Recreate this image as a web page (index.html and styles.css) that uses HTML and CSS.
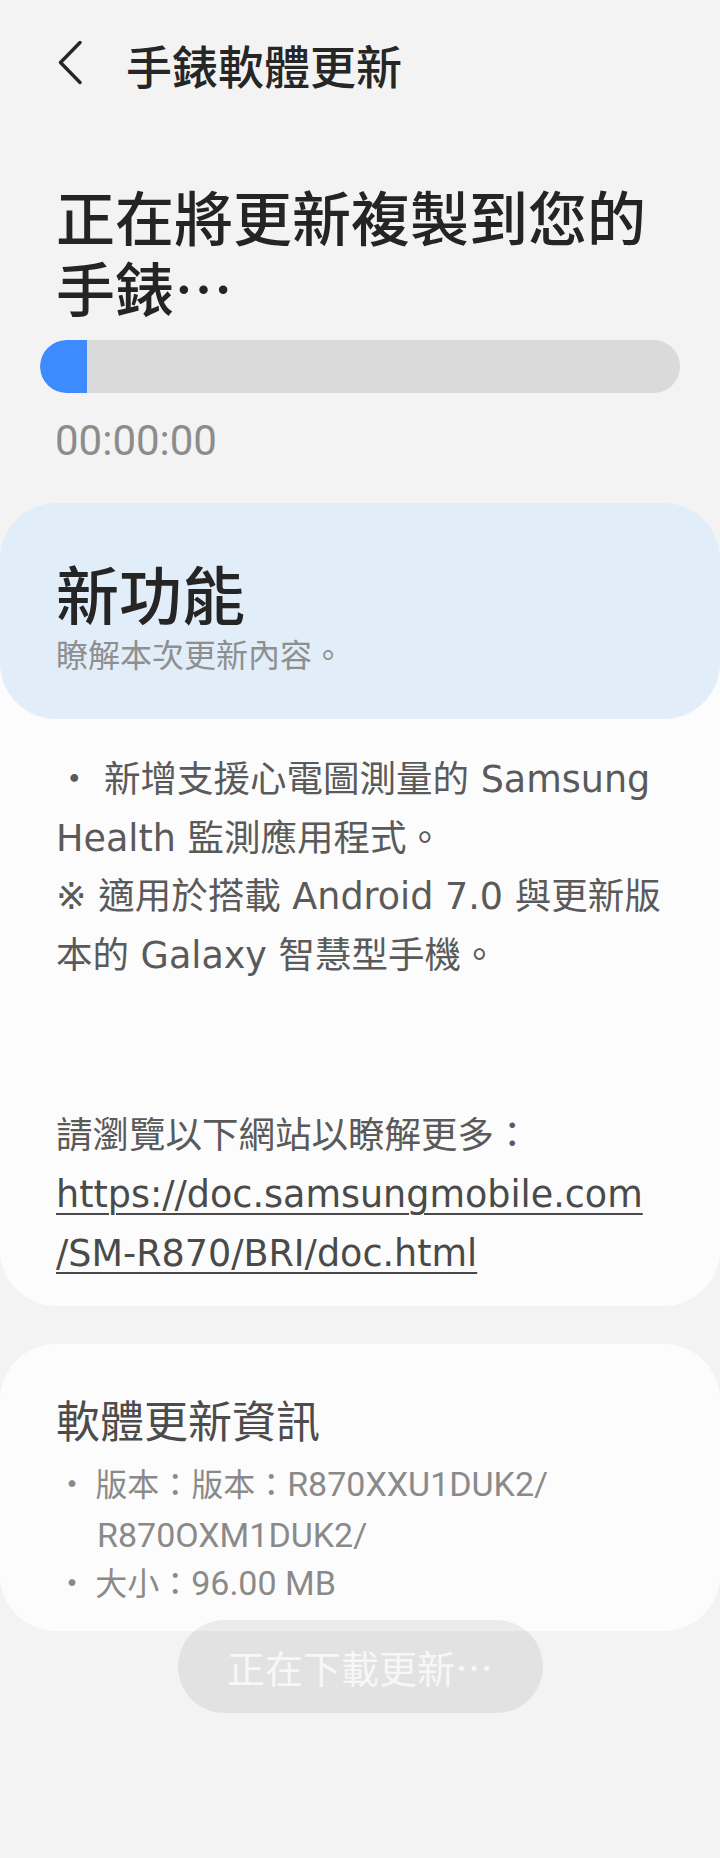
FILE: index.html
```html
<!DOCTYPE html>
<html lang="zh-Hant">
<head>
<meta charset="utf-8">
<title>手錶軟體更新</title>
<link rel="stylesheet" href="styles.css">
</head>
<body>
<div class="page">
  <header class="appbar">
    <svg class="back" width="28" height="44" viewBox="0 0 28 44" aria-hidden="true">
      <path d="M24 1.5 L4.5 21.5 L24 41.5" fill="none" stroke="#262626" stroke-width="3.4" stroke-linecap="round" stroke-linejoin="round"/>
    </svg>
    <h1 class="appbar-title">手錶軟體更新</h1>
  </header>

  <section class="status">
    <h2 class="status-title">正在將更新複製到您的<br>手錶…</h2>
    <div class="progress"><div class="progress-fill" style="width:47px"></div></div>
    <div class="time">00:00:00</div>
  </section>

  <section class="card">
    <div class="card-head">
      <h3 class="feature-title">新功能</h3>
      <p class="feature-sub">瞭解本次更新內容。</p>
    </div>
    <div class="notes">
      <p class="line">・ 新增支援心電圖測量的 Samsung</p>
      <p class="line">Health 監測應用程式。</p>
      <p class="line">※ 適用於搭載 Android 7.0 與更新版</p>
      <p class="line">本的 Galaxy 智慧型手機。</p>
      <p class="line blank">&nbsp;</p>
      <p class="line blank">&nbsp;</p>
      <p class="line">請瀏覽以下網站以瞭解更多：</p>
      <p class="line"><a class="link">https://doc.samsungmobile.com<br>/SM-R870/BRI/doc.html</a></p>
    </div>
  </section>

  <section class="card info">
    <h3 class="info-title">軟體更新資訊</h3>
    <ul class="info-list">
      <li>・ 版本：版本：<span class="num">R870XXU1DUK2/</span><br><span class="num">R870OXM1DUK2/</span></li>
      <li class="size">・ 大小：<span class="num">96.00 MB</span></li>
    </ul>
  </section>

  <div class="button">正在下載更新…</div>
</div>
</body>
</html>
```
FILE: styles.css
```css
html, body {
  margin: 0;
  padding: 0;
  background: #f3f3f3;
}
body {
  font-family: "Noto Sans CJK TC", "Noto Sans", sans-serif;
  color: #262626;
}
.page {
  width: 720px;
  min-height: 1858px;
}
h1, h2, h3, p, ul {
  margin: 0;
  padding: 0;
}

.appbar {
  height: 128px;
  display: flex;
  align-items: center;
  padding-left: 56px;
  box-sizing: border-box;
}
.back {
  display: block;
  margin-top: -2px;
}
.appbar-title {
  margin-left: 42px;
  font-size: 46px;
  line-height: 60px;
  font-weight: 500;
  color: #262626;
}

.status {
  padding: 52px 40px 0 40px;
}
.status-title {
  padding-left: 16px;
  font-size: 59px;
  line-height: 71px;
  font-weight: 500;
  color: #242424;
}
.progress {
  margin-top: 18px;
  height: 53px;
  border-radius: 27px;
  background: #dadada;
  overflow: hidden;
}
.progress-fill {
  height: 100%;
  background: #3d8bff;
  border-radius: 27px 0 0 27px;
}
.time {
  margin-top: 24px;
  padding-left: 15px;
  font-family: Roboto, "Noto Sans", sans-serif;
  font-size: 42px;
  line-height: 48px;
  color: #8c8c8c;
}

.card {
  margin-top: 38px;
  background: #fcfcfc;
  border-radius: 56px;
}
.card-head {
  height: 216px;
  box-sizing: border-box;
  padding: 50px 56px 0 56px;
  background: #e1edf9;
  border-radius: 56px;
}
.feature-title {
  font-size: 63px;
  line-height: 78px;
  font-weight: 500;
  color: #252525;
}
.feature-sub {
  font-size: 32px;
  line-height: 44px;
  color: #8f8f8f;
}
.notes {
  padding: 32px 40px 23px 56px;
}
.line {
  font-family: "DejaVu Sans", "Noto Sans CJK TC", sans-serif;
  font-size: 36.5px;
  line-height: 58.6px;
  color: #5a5a5a;
  white-space: nowrap;
}
.line.blank {
  line-height: 61px;
}
.link {
  color: #4a4a4a;
  text-decoration: underline;
  text-decoration-thickness: 2px;
  text-underline-offset: 6px;
}

.info {
  margin-top: 38px;
  padding: 45px 40px 28px 56px;
}
.info-title {
  font-size: 44px;
  line-height: 60px;
  font-weight: 400;
  color: #4c4c4c;
}
.info-list {
  list-style: none;
  margin-top: 8px;
}
.info-list li {
  font-size: 32px;
  line-height: 51px;
  color: #8a8a8a;
  padding-left: 41px;
  text-indent: -41px;
}
.info-list li.size {
  line-height: 44px;
}
.num {
  font-family: Roboto, sans-serif;
  font-size: 34px;
  line-height: 0;
}

.button {
  margin: -11px auto 0 auto;
  width: 365px;
  height: 93px;
  border-radius: 47px;
  background: rgba(0, 0, 0, 0.065);
  display: flex;
  align-items: center;
  justify-content: center;
  font-size: 38px;
  color: #f7f7f7;
}
```
